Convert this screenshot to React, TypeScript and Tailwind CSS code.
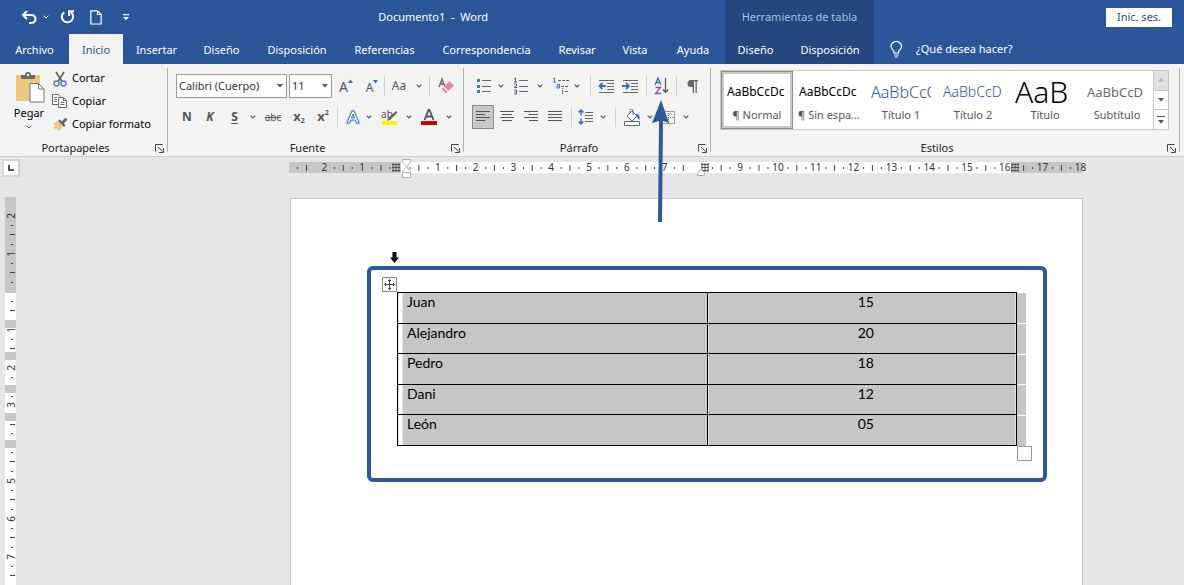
import React from "react";

const tabs = [
  { name: "Archivo", className: "w-[69px]" },
  { name: "Inicio", className: "w-[54px] bg-[#f3f3f3] text-[#2b579a]" },
  { name: "Insertar", className: "w-[67px]" },
  { name: "Diseño", className: "w-[63px]" },
  { name: "Disposición", className: "w-[88px]" },
  { name: "Referencias", className: "w-[87px]" },
  { name: "Correspondencia", className: "w-[117px]" },
  { name: "Revisar", className: "w-[64px]" },
  { name: "Vista", className: "w-[52px]" },
  { name: "Ayuda", className: "w-[64px]" },
];

const styles = [
  { sample: "AaBbCcDc", name: "¶ Normal", className: "text-[12px] text-black" },
  { sample: "AaBbCcDc", name: "¶ Sin espa...", className: "text-[12px] text-black" },
  { sample: "AaBbCcC", name: "Título 1", className: "text-[16px] font-light text-[#2f5496]" },
  { sample: "AaBbCcD", name: "Título 2", className: "text-[14px] font-light text-[#2f5496]" },
  { sample: "AaB", name: "Título", className: "text-[30px] font-light text-black" },
  { sample: "AaBbCcD", name: "Subtítulo", className: "text-[13px] text-[#6a6a6a]" },
];

const rows = [
  ["Juan", "15"],
  ["Alejandro", "20"],
  ["Pedro", "18"],
  ["Dani", "12"],
  ["León", "05"],
];

const Chevron: React.FC<{ label: string }> = ({ label }) => (
  <button aria-label={label} className="flex h-6 w-3 items-center justify-center">
    <svg width="6" height="4" fill="none" stroke="#555" strokeWidth="1.2">
      <path d="M.7.7 3 3 5.3.7" />
    </svg>
  </button>
);

const Separator = ({ className = "" }: { className?: string }) => (
  <span className={`h-5 w-px bg-[#d0d0d0] ${className}`} />
);

type ToolProps = {
  label: string;
  className?: string;
  children: React.ReactNode;
};

const Tool: React.FC<ToolProps> = ({ label, className = "w-6", children }) => (
  <button
    aria-label={label}
    className={`flex h-6 shrink-0 items-center justify-center ${className}`}
  >
    {children}
  </button>
);

type GroupProps = {
  title: string;
  className?: string;
  children: React.ReactNode;
};

const Group: React.FC<GroupProps> = ({ title, className = "", children }) => (
  <section className={`flex flex-col ${className}`}>
    <div className="flex-1">{children}</div>
    <div className="flex h-4 items-center pr-[3px]">
      <h2 className="flex-1 pr-1 text-center text-[11px] leading-4 text-[#222]">{title}</h2>
      <button aria-label={`Opciones de ${title}`}>
        <svg width="9" height="9" fill="none" stroke="#444">
          <path d="M.5 7.500V.5H7.500M3 3l4.500 4.500M8.500 4v4.500H4" />
        </svg>
      </button>
    </div>
  </section>
);

const Divider = () => <span className="my-1 w-px bg-[#b4b4b4]" />;

const Lines: React.FC<{ d: string }> = ({ d }) => (
  <svg width="16" height="14" fill="none" stroke="#555">
    <path d={d} />
  </svg>
);

const Header = () => (
  <header className="flex h-16 bg-[#2b579a] text-[11px] text-white">
    <div className="flex shrink-0 flex-col">
      <div className="flex h-[34px] items-center">
        <button aria-label="Deshacer" className="ml-[21px] w-[18px]">
          <svg width="17" height="15" fill="none" stroke="white" strokeWidth="2">
            <path d="M6 1 2 5l4 4M2 5h8.500a4 4 0 0 1 0 8H8" />
          </svg>
        </button>
        <button aria-label="Opciones de deshacer" className="ml-1">
          <svg width="6" height="4" fill="none" stroke="white">
            <path d="M.7.7 3 3 5.300.7" />
          </svg>
        </button>
        <button aria-label="Rehacer" className="ml-[11px]">
          <svg width="15" height="16" fill="none" stroke="white" strokeWidth="2">
            <path d="M4.200 3.200A5.600 5.600 0 1 0 11 3.400M9 7V2.200h5" />
          </svg>
        </button>
        <button aria-label="Nuevo" className="ml-[15px]">
          <svg width="12" height="15" fill="none" stroke="white" strokeWidth="1.200">
            <path d="M.8.8H7.500L11.200 4.500V14H.8ZM7.500.8V4.500h3.700" />
          </svg>
        </button>
        <button aria-label="Personalizar barra" className="ml-[21px]">
          <svg width="6" height="7" fill="white">
            <path d="M0 0h6v1.200H0ZM0 3h6L3 6.200Z" />
          </svg>
        </button>
        <h1 className="flex-1 pr-[237px] text-right whitespace-pre">Documento1  -  Word</h1>
      </div>
      <nav className="flex h-[30px]">
        {tabs.map((tab) => (
          <button key={tab.name} className={`pt-0.5 text-center whitespace-nowrap ${tab.className}`}>
            {tab.name}
          </button>
        ))}
      </nav>
    </div>
    <div className="flex w-[149px] shrink-0 flex-col bg-[#24477e]">
      <div className="flex h-[34px] items-center justify-center text-[#a9bfe0]">
        Herramientas de tabla
      </div>
      <nav className="flex h-[30px]">
        <button className="w-[61px] pt-0.5">Diseño</button>
        <button className="flex-1 pt-0.5">Disposición</button>
      </nav>
    </div>
    <div className="flex flex-1 flex-col">
      <div className="flex h-[34px] items-center justify-end pr-3">
        <button className="h-[19px] w-[66px] bg-white text-[#2b4a7c]">Inic. ses.</button>
      </div>
      <button className="flex h-[30px] items-center pl-4">
        <svg width="13" height="17" fill="none" stroke="white" strokeWidth="1.200">
          <path d="M4 12V10.500C3.500 9 1 8 1 5.500a5.300 5 0 0 1 10.600 0C11.600 8 9.100 9 8.600 10.500V12ZM4 14h4.600M4.800 16h3" />
        </svg>
        <span className="pl-[13px]">¿Qué desea hacer?</span>
      </button>
    </div>
  </header>
);

const Clipboard = () => (
  <Group title="Portapapeles" className="w-[167px]">
    <div className="flex pt-[3px]">
      <button className="flex w-[52px] flex-col items-center pt-1 pl-[6px] text-[11px] leading-4">
        <svg width="30" height="32" className="ml-0.5">
          <path d="M1 4h24v26H1Z" fill="#ecc77d" />
          <path d="M6 8V4h4a3 3 0 0 1 6 0h4v4Z" fill="#6b6b6b" />
          <circle cx="13" cy="4" r="1.200" fill="#f3f3f3" />
          <path d="M15 12.500h8.500l5.500 5.500v13H15Z" fill="white" stroke="#777" />
          <path d="M23.500 12.500V18H29" fill="none" stroke="#777" />
        </svg>
        <span className="pt-0.5">Pegar</span>
        <svg width="6" height="4" fill="none" stroke="#555" className="mt-1">
          <path d="M.7.7 3 3 5.300.7" />
        </svg>
      </button>
      <div className="flex flex-col text-[11px]">
        <button className="flex h-[23px] items-center gap-1">
          <svg width="16" height="16" fill="none" strokeWidth="1.500">
            <path d="M4 1l6 9.500M12 1 6 10.500" stroke="#666" strokeWidth="1.800" />
            <circle cx="4.500" cy="12.500" r="2.500" stroke="#5b7fc0" />
            <circle cx="11.500" cy="12.500" r="2.500" stroke="#5b7fc0" />
          </svg>
          Cortar
        </button>
        <button className="flex h-[23px] items-center gap-1">
          <svg width="16" height="15" fill="white" stroke="#666">
            <path d="M.5.500h6l2 2v8h-8ZM2 3.500h3M2 5.500h3M2 7.500h3" />
            <path d="M6.500 3.500h5l3 3v7h-8ZM11.500 3.500v3h3M8.500 8.500h4M8.500 10.500h4" />
          </svg>
          Copiar
        </button>
        <button className="flex h-[23px] items-center gap-1">
          <svg width="16" height="15">
            <path d="m1 6 5-1.500 5 5-4 4.500-2-1 .5-2L3 12 1.500 10.500 3.500 9Z" fill="#ecc77d" />
            <path d="m6 4 1.500-1.500 2.300 1.800L13.500.8l2 2-3.600 3.500 1.600 2L12 10Z" fill="#666" />
          </svg>
          Copiar formato
        </button>
      </div>
    </div>
  </Group>
);

const SelectArrow = () => (
  <svg
    width="6"
    height="4"
    fill="#555"
    className="pointer-events-none absolute top-[10px] right-1"
  >
    <path d="M0 0h6L3 3.500Z" />
  </svg>
);

const Font = () => (
  <Group title="Fuente" className="w-[295px]">
    <div className="flex items-center pt-[10px] pl-2">
      <label className="relative mr-0.5">
        <select
          aria-label="Fuente"
          className="block h-6 w-[111px] appearance-none border border-[#999] bg-white pl-0.5 text-[11px] text-[#333]"
        >
          <option>Calibri (Cuerpo)</option>
        </select>
        <SelectArrow />
      </label>
      <label className="relative">
        <select
          aria-label="Tamaño de fuente"
          className="block h-6 w-[43px] appearance-none border border-[#999] bg-white pl-0.5 text-[11px] text-[#333]"
        >
          <option>11</option>
        </select>
        <SelectArrow />
      </label>
      <Tool label="Aumentar tamaño" className="w-7">
        <span className="text-[14px] text-[#555]">A</span>
        <svg width="5" height="14" fill="#3d6db5">
          <path d="M0 4h5L2.500.500Z" />
        </svg>
      </Tool>
      <Tool label="Reducir tamaño" className="w-6">
        <span className="pt-1 text-[12px] text-[#555]">A</span>
        <svg width="5" height="14" fill="#3d6db5">
          <path d="M0 1h5L2.500 4.500Z" />
        </svg>
      </Tool>
      <Separator />
      <Tool label="Mayúsculas y minúsculas" className="w-7 text-[12px] text-[#555]">
        Aa
      </Tool>
      <Chevron label="Opciones de mayúsculas" />
      <Separator className="ml-1" />
      <Tool label="Borrar formato" className="w-8">
        <svg width="16" height="18">
          <path d="M1 10 4 2l3 8M2.500 7h3" fill="none" stroke="#666" strokeWidth="1.400" />
          <path d="m6 9.500 5.500-5.500L16 8.500 10.500 14Z" fill="#e58a9c" />
          <path d="m5 10.500 4.500 4.500-1.500 1.500L3.500 12Z" fill="#e58a9c" />
        </svg>
      </Tool>
    </div>
    <div className="flex items-center pt-[7px] pl-2 text-[#555]">
      <Tool label="Negrita" className="w-[22px] text-[12px] font-bold">
        N
      </Tool>
      <Tool label="Cursiva" className="w-6 text-[12px] font-bold italic">
        K
      </Tool>
      <Tool label="Subrayado" className="w-[25px] text-[12px] font-bold underline underline-offset-2">
        S
      </Tool>
      <Chevron label="Opciones de subrayado" />
      <Tool label="Tachado" className="w-7 text-[10px] line-through">
        abc
      </Tool>
      <Tool label="Subíndice" className="w-6 text-[13px] font-bold">
        x<span className="pt-2 text-[7px]">2</span>
      </Tool>
      <Tool label="Superíndice" className="w-6 text-[13px] font-bold">
        x<span className="pb-2 text-[7px]">2</span>
      </Tool>
      <Separator className="ml-0.5" />
      <Tool label="Efectos de texto" className="w-[25px] pl-1">
        <svg width="16" height="16" fill="white" strokeLinejoin="round">
          <path
            d="M2 14 7 2h2l5 12h-2.500l-1.200-3H5.700l-1.200 3ZM6.500 9h3L8 5Z"
            stroke="#bcd5f3"
            strokeWidth="3"
          />
          <path
            d="M2 14 7 2h2l5 12h-2.500l-1.200-3H5.700l-1.200 3ZM6.500 9h3L8 5Z"
            stroke="#4377bd"
          />
        </svg>
      </Tool>
      <Chevron label="Opciones de efectos" />
      <Tool label="Color de resaltado" className="relative w-7">
        <span className="pr-1 pb-1.5 text-[10px] leading-4">ab</span>
        <svg width="17" height="18" className="absolute top-[3px] left-[6px]">
          <path d="m15 3 1.500 1.500L9 12l-3 1 1-3Z" fill="#666" />
          <path d="M1 13h15v4H1Z" fill="#fff200" />
        </svg>
      </Tool>
      <Chevron label="Opciones de resaltado" />
      <Tool label="Color de fuente" className="w-7">
        <svg width="16" height="18">
          <path d="m3.500 12 4-10h1l4 10M5 8.500h6" fill="none" stroke="#555" strokeWidth="1.800" />
          <path d="M0 13h16v4H0Z" fill="#d00000" />
        </svg>
      </Tool>
      <Chevron label="Opciones de color" />
    </div>
  </Group>
);

const Paragraph = () => (
  <Group title="Párrafo" className="w-[246px]">
    <div className="flex items-center pt-[10px] pl-2">
      <Tool label="Viñetas" className="w-[23px]">
        <svg width="16" height="16">
          <path d="M6 2.500h9M6 8.500h9M6 13.500h9" stroke="#666" />
          <path d="M1 1h3v3H1ZM1 7h3v3H1ZM1 12h3v3H1Z" fill="#4472c4" />
        </svg>
      </Tool>
      <Chevron label="Opciones de viñetas" />
      <Tool label="Numeración" className="w-[27px]">
        <svg width="16" height="18">
          <path d="M6 3.500h9M6 9.500h9M6 14.500h9" stroke="#666" />
          <path
            d="M1 2l1.500-1v4M1 5h3M1 7h2.500v2L1 10.500h3M1 13h2.500v4H1M1.500 15h2"
            fill="none"
            stroke="#4b6284"
          />
        </svg>
      </Tool>
      <Chevron label="Opciones de numeración" />
      <Tool label="Lista multinivel" className="w-[25px] pl-1">
        <svg width="18" height="18">
          <path d="M6 3.500h11M9 9.500h8M13 14.500h4" stroke="#666" strokeDasharray="3 1" />
          <path
            d="M1 2l1.500-1v4M1 5h3M5 7.500h2.500V11H5V9h2M10.500 13v4M10.500 11v1"
            fill="none"
            stroke="#4472c4"
          />
        </svg>
      </Tool>
      <Chevron label="Opciones de lista multinivel" />
      <Separator className="ml-[7px]" />
      <Tool label="Disminuir sangría" className="ml-[3px] w-6">
        <svg width="17" height="14" fill="none">
          <path d="M1 1.500h15M9 4.500h7M9 7.500h7M9 10.500h7M1 13.500h15" stroke="#666" />
          <path d="M8 7H2M4.500 4 1.500 7l3 3" stroke="#3d6db5" strokeWidth="1.800" />
        </svg>
      </Tool>
      <Tool label="Aumentar sangría" className="w-6">
        <svg width="17" height="14" fill="none">
          <path d="M1 1.500h15M9 4.500h7M9 7.500h7M9 10.500h7M1 13.500h15" stroke="#666" />
          <path d="M0 7h6M4 4l3 3-3 3" stroke="#3d6db5" strokeWidth="1.800" />
        </svg>
      </Tool>
      <Separator className="ml-1" />
      <div className="relative ml-0.5">
        <Tool label="Ordenar">
          <svg width="15" height="18" fill="none" strokeWidth="1.300">
            <path d="M1 8 4 1l3 7M2 5.500h4" stroke="#3d6db5" />
            <path d="M1.500 10.500h5L1.500 16.500h5.500" stroke="#8a4fb0" />
            <path d="M11.500 1v14.500M9 12.500l2.500 3 2.500-3" stroke="#555" />
          </svg>
        </Tool>
        <svg
          width="18"
          height="122"
          fill="#2f5896"
          className="pointer-events-none absolute top-[26px] left-[3px] z-10"
        >
          <path d="M9 0 17 23 11 21 10 122H6L7 21 0 23Z" />
        </svg>
      </div>
      <Separator className="ml-[3px]" />
      <Tool label="Mostrar todo" className="ml-[3px] w-6">
        <svg width="11" height="13" fill="#666">
          <path d="M4 0h7v1.200H9.800V13H8.500V1.200H7V13H5.700V7H4a3.500 3.500 0 0 1 0-7Z" />
        </svg>
      </Tool>
    </div>
    <div className="flex items-center pt-[7px] pl-2">
      <Tool
        label="Alinear a la izquierda"
        className="w-[22px] border border-[#8c8c8c] bg-[#c8c8c8]"
      >
        <Lines d="M1 1.500h14M1 4.500h9M1 7.500h14M1 10.500h9" />
      </Tool>
      <Tool label="Centrar" className="ml-px w-6">
        <Lines d="M1 1.500h14M3 4.500h10M1 7.500h14M3 10.500h10" />
      </Tool>
      <Tool label="Alinear a la derecha">
        <Lines d="M1 1.500h14M6 4.500h9M1 7.500h14M6 10.500h9" />
      </Tool>
      <Tool label="Justificar">
        <Lines d="M1 1.500h14M1 4.500h14M1 7.500h14M1 10.500h14" />
      </Tool>
      <Separator className="ml-1" />
      <Tool label="Espaciado" className="ml-px w-6">
        <svg width="15" height="16" fill="none">
          <path d="M7 3.500h8M7 6.500h8M7 9.500h8M7 12.500h8" stroke="#666" />
          <path
            d="M3 1v5.500M.500 3.500 3 1l2.500 2.500M3 9.500V15M.500 12.500 3 15l2.500-2.500"
            stroke="#3d6db5"
            strokeWidth="1.500"
          />
        </svg>
      </Tool>
      <Chevron label="Opciones de espaciado" />
      <Separator className="ml-1.5" />
      <Tool label="Sombreado" className="ml-1 w-6">
        <svg width="17" height="17" fill="none" stroke="#666">
          <path d="m3 7 5-5 5 5-5 5ZM6 4V1.500a1.500 1.500 0 0 1 3 0V6" fill="white" />
          <path d="M12 5c3 0 4 2 3.500 6-1.500-1-2-3-3.500-4Z" fill="#3d6db5" stroke="none" />
          <path d="M.500 12.500h15v4H.500Z" fill="white" />
        </svg>
      </Tool>
      <Chevron label="Opciones de sombreado" />
      <Tool label="Bordes">
        <svg width="13" height="13" fill="none" stroke="#555" strokeDasharray="1 1">
          <path d="M.500.500h12v12H.500ZM6.500 0v13M0 6.500h13" />
        </svg>
      </Tool>
      <Chevron label="Opciones de bordes" />
    </div>
  </Group>
);

const Styles = () => (
  <Group title="Estilos" className="min-w-0 flex-1">
    <div className="mt-[6px] mr-[10px] ml-[9px] flex h-[60px] border border-[#c6c6c6] bg-white">
      {styles.map((style, i) => (
        <button
          key={style.name}
          className={`flex min-w-0 flex-1 flex-col items-center pt-[5px] ${
            i === 0 ? "border border-[#8c8c8c] inset-ring-2 inset-ring-[#c8c8c8]" : "border border-transparent"
          }`}
        >
          <span
            className={`flex h-[30px] w-[60px] items-center overflow-hidden leading-8 whitespace-nowrap ${style.className}`}
          >
            {style.sample}
          </span>
          <span className="w-full text-[11px] leading-4 whitespace-nowrap text-[#555]">
            {style.name}
          </span>
        </button>
      ))}
      <div className="flex w-[15px] flex-col divide-y divide-[#c6c6c6] border-l border-[#c6c6c6]">
        <button aria-label="Subir" className="flex flex-1 items-center justify-center bg-[#e1e1e1]">
          <svg width="6" height="4" fill="#b5b5b5">
            <path d="M0 3.500h6L3 0Z" />
          </svg>
        </button>
        <button aria-label="Bajar" className="flex flex-1 items-center justify-center">
          <svg width="6" height="4" fill="#555">
            <path d="M0 0h6L3 3.500Z" />
          </svg>
        </button>
        <button aria-label="Más estilos" className="flex flex-1 items-center justify-center">
          <svg width="8" height="8" fill="#555">
            <path d="M0 0h8v1H0ZM1 4h6L4 7.500Z" />
          </svg>
        </button>
      </div>
    </div>
  </Group>
);

const UNIT = 37.8;

// Positions are centimetres from the left margin, which sits at x = 112.
const HorizontalRuler = () => {
  const cm = Array.from({ length: 21 }, (_, i) => i - 2);
  return (
    <svg width="800" height="22" className="block shrink-0" fontSize="10" fill="#333">
      <path d="M0 5h112v11H0Z" fill="#c6c6c6" />
      <path d="M112 5h612v11H112Z" fill="white" />
      <path d="M722 5h71v11h-71Z" fill="#c6c6c6" />
      {cm.map((n) => {
        const x = 111 + n * UNIT;
        return (
          <g key={n}>
            {n !== 0 && n !== 8 && (
              <text x={x} y="14" textAnchor="middle">
                {Math.abs(n)}
              </text>
            )}
            {n !== 8 && n > -2 && <path d={`M${x - 10} 10v2`} stroke="#444" />}
            {n > -2 && <path d={`M${x - 19} 8v6`} stroke="#444" />}
            {n < 18 && n !== 16 && <path d={`M${x + 10} 10v2`} stroke="#444" />}
          </g>
        );
      })}
      <path d="M8.500 10v2M17.500 8v6" stroke="#444" />
      {[104, 413, 723].map((x) => (
        <path
          key={x}
          d={`M${x} 6v9M${x + 3} 6v9M${x + 6} 6v9M${x - 1} 7.500h8M${x - 1} 10.500h8M${x - 1} 13.500h8`}
          stroke="#555"
        />
      ))}
      <g fill="white" stroke="#b0b0b0">
        <path d="M113.500 2.500h8v3l-4 4.500-4-4.500ZM113.500 20.500v-6l4-4.500 4 4.500v6ZM113.500 15.500h8" />
        <path d="M408.500 18.500v-3l3.500-3.500 3.500 3.500v3Z" />
      </g>
    </svg>
  );
};

const verticalNumbers = [
  { y: 19, n: 2 },
  { y: 57, n: 1 },
  { y: 133, n: 1 },
  { y: 171, n: 2 },
  { y: 208, n: 3 },
  { y: 284, n: 5 },
  { y: 322, n: 6 },
  { y: 360, n: 7 },
];

const VerticalRuler = () => (
  <svg width="11" height="388" className="block" fontSize="10" fill="#333">
    <path d="M0 0h11v388H0Z" fill="white" />
    <path
      d="M0 0h11v96H0ZM0 123h11v8H0ZM0 155h11v8H0ZM0 188h11v8H0ZM0 216h11v8H0ZM0 243h11v8H0Z"
      fill="#c6c6c6"
    />
    <path
      d="M5 113.500h5M5 151.500h5M5 227.500h5M5 37.500h5M5 75.500h5M5 264.500h5M5 302.500h5M5 340.500h5M5 378.500h5"
      stroke="#444"
    />
    <path
      d="M6 28.500h2M6 47.500h2M6 66.500h2M6 85.500h2M6 104.500h2M6 142.500h2M6 180.500h2M6 199.500h2M6 236.500h2M6 255.500h2M6 274.500h2M6 293.500h2M6 312.500h2M6 331.500h2M6 350.500h2M6 369.500h2"
      stroke="#444"
    />
    {verticalNumbers.map(({ y, n }) => (
      <text key={y} transform={`translate(10 ${y}) rotate(-90)`} textAnchor="middle">
        {n}
      </text>
    ))}
  </svg>
);

const Page = () => (
  <div className="relative mt-[19px] mr-[101px] ml-px flex-1 border-x border-t border-[#c6c6c6] bg-white pt-[67px]">
    <svg width="9" height="11" className="absolute top-[53px] left-[99px]">
      <path d="M2.500 0h4v5.500H9L4.500 11 0 5.500h2.500Z" />
    </svg>
    <div className="relative mr-[35px] ml-[76px] rounded-md border-4 border-[#2f5896] pt-[22px] pr-[17px] pb-[32px] pl-[26px]">
      <svg
        width="15"
        height="15"
        fill="white"
        stroke="#888"
        className="absolute top-[7px] left-[11px]"
      >
        <path d="M.500.500h14v14H.500Z" />
        <path
          d="M7.500 2.500v10M2.500 7.500h10M6 4l1.500-1.500L9 4M6 11l1.500 1.500L9 11M4 6 2.500 7.500 4 9M11 6l1.500 1.500L11 9"
          fill="none"
          stroke="#444"
        />
      </svg>
      <div className="flex">
        <table className="h-[154px] flex-1 border-collapse font-[Lato,sans-serif] text-[14px] leading-4 text-black">
          <tbody>
            {rows.map(([name, value]) => (
              <tr key={name}>
                <td className="w-1/2 border border-black bg-linear-to-r from-white from-[4px] to-[#c6c6c6] to-[4px] pt-px pl-[9px] align-top">
                  {name}
                </td>
                <td className="w-1/2 border border-black bg-linear-to-r from-white from-[1px] to-[#c6c6c6] to-[1px] pt-px pl-2 text-center align-top">
                  {value}
                </td>
              </tr>
            ))}
          </tbody>
        </table>
        <div className="flex w-[9px] flex-col gap-px pt-px">
          {rows.map(([name]) => (
            <span key={name} className="flex-1 bg-[#c6c6c6]" />
          ))}
        </div>
      </div>
      <span className="absolute right-[11px] bottom-[17px] size-[15px] border border-[#999] bg-white" />
    </div>
  </div>
);

const App: React.FC = () => {
  return (
    <div className="flex min-h-screen flex-col overflow-x-hidden bg-[#e6e6e6] font-['Noto_Sans',sans-serif]">
      <Header />
      <div className="flex h-[93px] border-b border-[#cfcfcf] bg-[#f3f3f3]">
        <Clipboard />
        <Divider />
        <Font />
        <Divider />
        <Paragraph />
        <Divider />
        <Styles />
        <Divider />
        <span className="w-1" />
      </div>
      <main className="flex flex-1">
        <div className="w-[289px] shrink-0">
          <button
            aria-label="Tabulación izquierda"
            className="mt-0.5 ml-0.5 flex size-[18px] items-center justify-center border-2 border-[#d6d6d6] bg-white"
          >
            <svg width="6" height="6" fill="none" stroke="#555" strokeWidth="2">
              <path d="M1 0v5h5" />
            </svg>
          </button>
          <div className="pt-5 pl-[5px]">
            <VerticalRuler />
          </div>
        </div>
        <div className="flex min-w-0 flex-1 flex-col">
          <HorizontalRuler />
          <Page />
        </div>
      </main>
    </div>
  );
};

export default App;
